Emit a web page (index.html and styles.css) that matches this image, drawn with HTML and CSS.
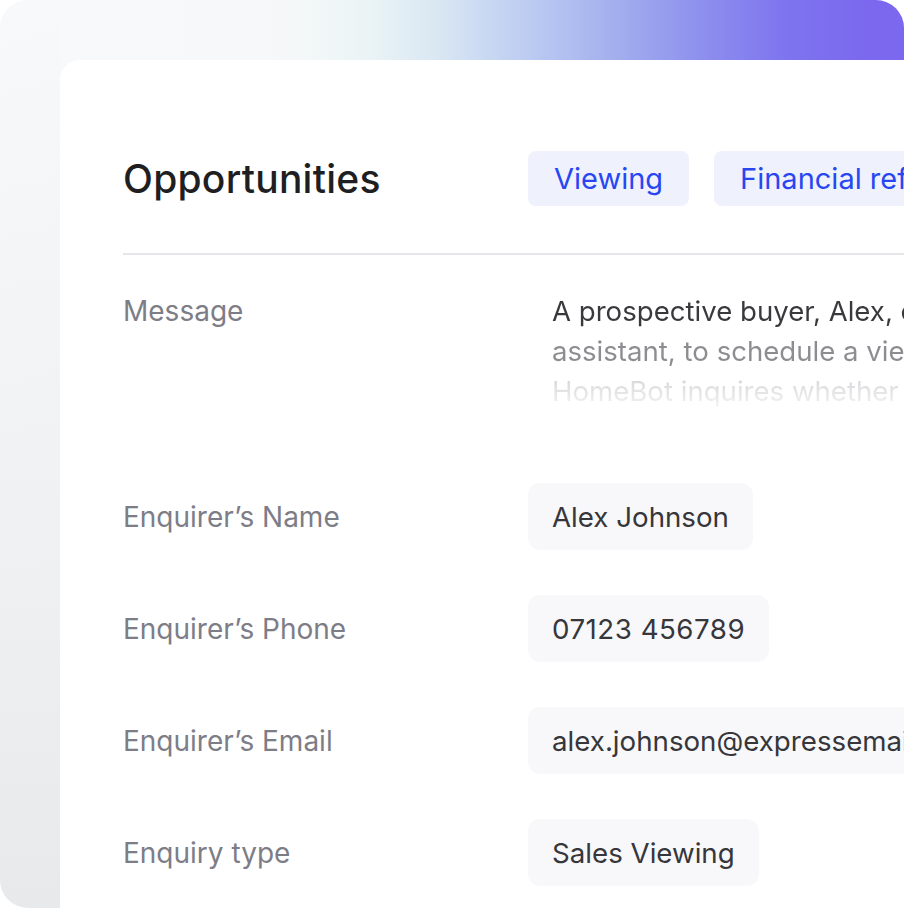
FILE: index.html
```html
<!DOCTYPE html>
<html lang="en">
<head>
<meta charset="utf-8">
<title>Opportunities</title>
<link rel="stylesheet" href="styles.css">
</head>
<body>
<div class="frame">
  <div class="card">
    <div class="head">
      <h1 class="title">Opportunities</h1>
      <div class="tags">
        <span class="tag">Viewing</span>
        <span class="tag">Financial referral</span>
      </div>
    </div>
    <div class="divider"></div>
    <div class="rows">
      <div class="label msg-label">Message</div>
      <div class="message">
        <span class="line">A prospective buyer, Alex, contacts HomeBot, the AI</span>
        <span class="line">assistant, to schedule a viewing of a property listing.</span>
        <span class="line">HomeBot inquires whether Alex has a mortgage in principle</span>
      </div>

      <div class="label">Enquirer’s Name</div>
      <div class="value"><span class="box">Alex Johnson</span></div>

      <div class="label">Enquirer’s Phone</div>
      <div class="value"><span class="box box-num">07123 456789</span></div>

      <div class="label">Enquirer’s Email</div>
      <div class="value"><span class="box">alex.johnson@expressemail.co.uk</span></div>

      <div class="label">Enquiry type</div>
      <div class="value"><span class="box">Sales Viewing</span></div>
    </div>
  </div>
</div>
</body>
</html>
```

FILE: styles.css
```css
html, body {
  margin: 0;
  padding: 0;
  width: 904px;
  height: 908px;
  overflow: hidden;
  background: #ffffff;
}

body {
  font-family: "Inter", "Liberation Sans", sans-serif;
}

.frame {
  width: 904px;
  height: 908px;
  border-radius: 28px;
  box-sizing: border-box;
  padding: 60px 0 0 60px;
  background:
    linear-gradient(to bottom, rgba(234, 235, 237, 0) 0%, rgba(234, 235, 237, 0.6) 60%, rgba(232, 233, 235, 1) 100%) left top / 60px 100% no-repeat,
    linear-gradient(to right, #f8f9fb 0%, #f6f8f9 30%, #f1f7f7 36%, #e8f2f5 42%, #dae8f3 48%, #c9d8f2 54%, #b5c4f1 61%, #a0aced 69%, #8d8eee 78%, #7e74ef 87%, #7b68ee 96%, #7b68ee 100%);
}

.card {
  width: 1100px;
  height: 1000px;
  background: #ffffff;
  border-radius: 20px 0 0 0;
  box-sizing: border-box;
  padding: 91px 0 0 63px;
}

.head {
  display: grid;
  grid-template-columns: 405px auto;
  align-items: center;
  height: 55px;
}

.title {
  margin: 0;
  font-size: 39px;
  font-weight: 500;
  letter-spacing: 0.25px;
  color: #1f1f23;
}

.tags {
  display: flex;
  gap: 25px;
}

.tag {
  display: flex;
  align-items: center;
  height: 55px;
  padding: 0 26px;
  box-sizing: border-box;
  border-radius: 8px;
  background: #eff1fd;
  color: #2747f2;
  font-size: 29px;
  white-space: nowrap;
}

.divider {
  height: 2px;
  background: #e6e6ea;
  margin-top: 47px;
}

.rows {
  display: grid;
  grid-template-columns: 405px auto;
  row-gap: 45px;
  margin-top: 36px;
  align-items: center;
}

.label {
  font-size: 28px;
  color: #7d7d87;
  white-space: nowrap;
}

.msg-label {
  align-self: start;
  line-height: 40px;
}

.message {
  display: flex;
  flex-direction: column;
  padding-left: 24px;
  padding-bottom: 27px;
  font-size: 27.6px;
  line-height: 40px;
  color: transparent;
  background: linear-gradient(to bottom, #38383d 0%, #38383d 24%, #8c8c91 31%, #8c8c91 52%, #d6d6d9 58%, #e6e6e8 70%, #f4f4f5 80%, #ffffff 90%);
  -webkit-background-clip: text;
  background-clip: text;
}

.line {
  white-space: nowrap;
}

.value {
  display: flex;
}

.box {
  display: flex;
  align-items: center;
  height: 67px;
  padding: 0 24px;
  box-sizing: border-box;
  border-radius: 12px;
  background: #f8f8fa;
  color: #36363b;
  font-size: 27.7px;
  white-space: nowrap;
}

.box-num {
  letter-spacing: 0.5px;
}
```
